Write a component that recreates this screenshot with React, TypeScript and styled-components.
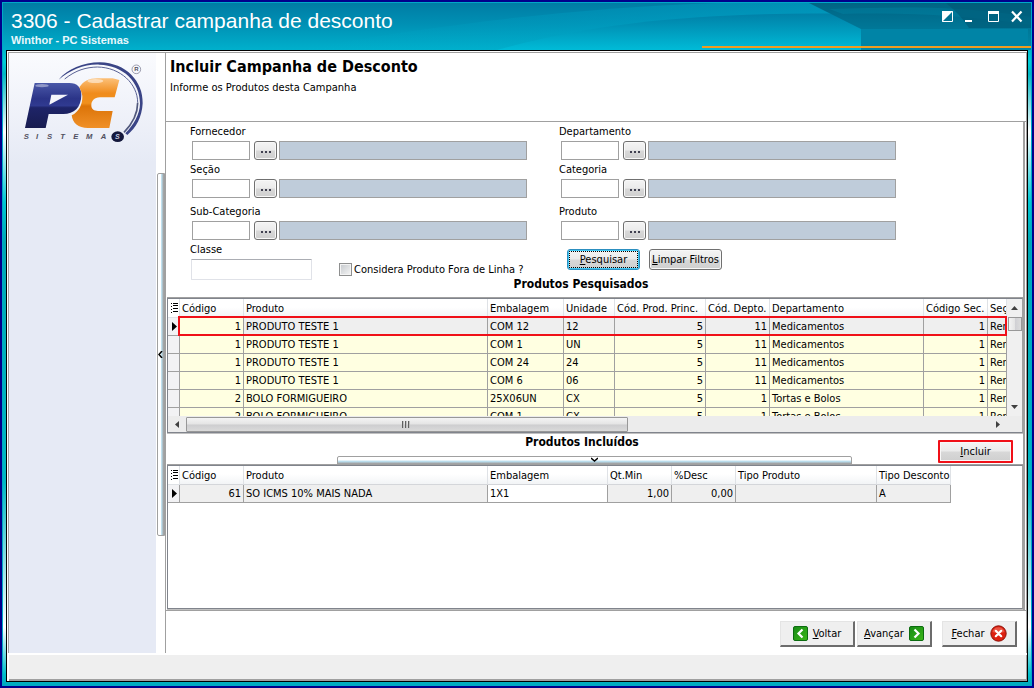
import React from 'react';
import styled, { createGlobalStyle, css } from 'styled-components';

const GlobalStyle = createGlobalStyle`
  * { box-sizing: border-box; }
  body { margin: 0; background: #00008b; }
  body, button, input, table {
    font-family: "DejaVu Sans Condensed", Tahoma, sans-serif;
    font-size: 11px;
    line-height: 16px;
    color: #000;
  }
  button, input { margin: 0; }
`;

const Frame = styled.div`
  display: flex;
  flex-direction: column;
  min-height: 100vh;
  border: 2px solid #00008b;
  padding: 1px 4px 4px;
  background: linear-gradient(#00b8cc 0, #00b0c4 44px, #00ced8 60px, #00b8c4 72px, #fff 130px, #00c8d4 200px, #00a8b4 240px, #00b8c4 480px, #fff 625px, #00c0cc 672px, #00a8bc 100%);
  box-shadow: inset 0 0 0 1px #00a8c8;
`;

const TitleBar = styled.header`
  position: relative;
  display: flex;
  justify-content: space-between;
  height: 47px;
  margin: 0 -3px;
  padding: 6px 8px 0;
  color: #fff;
  background: linear-gradient(#007ca4, #0090b4 45%, #00b0cc);
`;

const Waves = styled.svg`
  position: absolute;
  top: 0;
  right: 0;
  width: 734px;
  height: 47px;
`;

const Titles = styled.div`
  position: relative;
  font-family: "Liberation Sans", Arial, sans-serif;
`;

const AppTitle = styled.h1`
  margin: 0;
  font-size: 21px;
  line-height: 24px;
  font-weight: 400;
`;

const AppName = styled.p`
  margin: 0;
  font-size: 11px;
  line-height: 14px;
  font-weight: 700;
  color: #e8f8fc;
`;

const WindowControls = styled.div`
  position: relative;
  display: flex;
  gap: 11px;
  height: 14px;
`;

const WindowButton = styled.button`
  display: flex;
  width: 12px;
  height: 14px;
  padding: 0;
  border: 0;
  background: none;
`;

const Client = styled.div`
  flex: 1;
  display: flex;
  flex-direction: column;
  border: 1px solid #000;
  background: #fff;
  padding: 1px 0 0 1px;
`;

const Body = styled.div`
  flex: 1;
  display: flex;
  border: solid #a0a0a0;
  border-width: 1px 0 0 1px;
`;

const Sidebar = styled.aside`
  width: 147px;
  flex: none;
  background: linear-gradient(#fafbfe, #f1f3fa 50px, #e6eaf5 110px, #e6eaf5);
`;

const LogoBox = styled.div`
  padding: 1px 0 0 5px;
`;

const LogoImage = styled.svg`
  display: block;
`;

const Gutter = styled.div`
  width: 9px;
  flex: none;
  padding: 120px 0 0 1px;
`;

const SideHandle = styled.button`
  display: flex;
  align-items: center;
  width: 8px;
  height: 363px;
  padding: 0;
  border: 1px solid #a0a0a0;
  border-radius: 2px 0 0 2px;
  background: linear-gradient(90deg, #fff 45%, #b8dcec 60%, #a0a0a0 95%);
`;

const Main = styled.main`
  flex: 1;
  min-width: 0;
  display: flex;
  flex-direction: column;
  border-left: 1px solid #a0a0a0;
  border-right: 1px solid #a0a0a0;
`;

const PageHeader = styled.div`
  height: 69px;
  padding: 4px 4px 0;
  border-bottom: 1px solid #a0a0a0;
`;

const PageTitle = styled.h2`
  margin: 0;
  font-size: 16px;
  line-height: 20px;
`;

const PageHint = styled.p`
  margin: 3px 0 0;
`;

const Work = styled.div`
  flex: 1;
  display: flex;
  flex-direction: column;
  margin-right: 1px;
  border-right: 2px solid #a0a0a0;
`;

const Filters = styled.form`
  display: grid;
  grid-template-columns: 1fr 1fr;
  column-gap: 32px;
  padding: 0 127px 0 24px;
  height: 153px;
`;

const FilterColumn = styled.div`
  display: flex;
  flex-direction: column;
`;

const Field = styled.div<{ $spaced?: boolean }>`
  margin-top: ${(p) => (p.$spaced ? 4 : 0)}px;
`;

const Label = styled.label`
  display: block;
  height: 19px;
  line-height: 20px;
`;

const FieldRow = styled.div`
  display: flex;
  margin-left: 2px;
  height: 19px;
`;

const TextBox = styled.input`
  width: 58px;
  border: 1px solid #a0a0a0;
  padding: 0 3px;
  outline: none;
`;

const ResultBox = styled.input`
  flex: 1;
  min-width: 0;
  border: 1px solid #a0a0a0;
  background: #bfccda;
  padding: 0 3px;
`;

const buttonFace = css`
  border: 1px solid #707070;
  border-radius: 3px;
  background: linear-gradient(#f4f4f4, #ebebeb 48%, #d8d8d8 52%, #cfcfcf);
  box-shadow: inset 0 0 0 1px #f8f8f8;
`;

const LookupButton = styled.button`
  ${buttonFace}
  display: flex;
  align-items: center;
  justify-content: center;
  width: 23px;
  padding: 3px 0 0;
  margin: 0 2px 0 4px;
`;

const ClassBox = styled.input`
  display: block;
  width: 121px;
  height: 21px;
  border: 1px solid #e0e2e8;
  border-top-color: #abadb3;
  border-radius: 1px;
`;

const ClassRow = styled.div`
  display: flex;
  align-items: center;
  gap: 27px;
  margin-left: 1px;
`;

const CheckLabel = styled.label`
  display: flex;
  align-items: center;
  gap: 2px;
  white-space: nowrap;
`;

const Check = styled.input`
  appearance: none;
  width: 13px;
  height: 13px;
  border: 1px solid #8e8f8f;
  box-shadow: inset 0 0 0 1px #f4f4f4;
  background: linear-gradient(135deg, #c4c8cc, #f6f6f6);
`;

const Actions = styled.div`
  display: flex;
  align-items: flex-end;
  gap: 9px;
  margin: 9px 0 0 8px;
`;

const PushButton = styled.button<{ $focused?: boolean }>`
  ${buttonFace}
  height: 21px;
  width: 73px;
  padding: 0;
  line-height: 18px;
  white-space: nowrap;
  ${(p) =>
    p.$focused &&
    css`
      border-color: #2c8fc0;
      box-shadow: inset 0 0 0 1px #40c8f4;
      outline: 1px dotted #000;
      outline-offset: -3px;
    `}
`;

const SectionTitle = styled.h3`
  margin: 0;
  font-size: 12px;
  line-height: 18px;
  text-align: center;
`;

const SearchedHeading = styled(SectionTitle)`
  height: 23px;
  padding-right: 27px;
`;

const IncludedBar = styled.div`
  position: relative;
  height: 32px;
  padding-right: 25px;
`;

const IncludeButton = styled(PushButton)`
  position: absolute;
  right: 10px;
  top: 7px;
  width: 75px;
  height: 23px;
  border: 2px solid #f01018;
  border-radius: 1px;
`;

const BottomHandle = styled.button`
  position: absolute;
  bottom: 0;
  left: 20%;
  width: 60%;
  height: 9px;
  display: flex;
  justify-content: center;
  padding: 0;
  border: 1px solid #a0a0a0;
  border-radius: 2px 2px 0 0;
  background: linear-gradient(#fff 40%, #b8dcec 65%, #a0a0a0 95%);
`;

const GridBox = styled.section<{ $fill?: boolean }>`
  display: grid;
  grid-template-columns: minmax(0, 1fr) auto;
  align-content: start;
  margin-left: 1px;
  border: 1px solid #80848c;
  border-right-color: #a0a0a0;
  box-shadow: 0 -1px #a0a0a0, 0 1px #c0c0c0;
  ${(p) =>
    p.$fill &&
    css`
      flex: 1;
      margin-bottom: 1px;
    `}
`;

const Viewport = styled.div<{ $rows?: number }>`
  overflow: hidden;
  ${(p) => p.$rows && css`height: 117px;`}
`;

const DataTable = styled.table<{ $full?: boolean }>`
  table-layout: fixed;
  border-collapse: separate;
  border-spacing: 0;
  width: ${(p) => (p.$full ? '100%' : '783px')};
  white-space: nowrap;
`;

const Head = styled.th`
  height: 19px;
  padding: 2px 0 0 2px;
  overflow: hidden;
  text-align: left;
  font-weight: 400;
  line-height: 16px;
  border-right: 1px solid #dfe2e6;
  border-bottom: 1px solid #d4d6da;
  background: linear-gradient(#fff 45%, #f2f4f6);
`;

const Marker = styled.th<{ $plain?: boolean }>`
  height: 18px;
  padding: 0 0 0 3px;
  line-height: 0;
  background: #f2f2f4;
  border-right: 1px solid #a0a0a0;
  border-bottom: 1px solid #a0a0a0;
  ${(p) =>
    p.$plain &&
    css`
      padding-left: 1px;
      background: #fff;
      border-color: #dfe2e6;
    `}
`;

const Cell = styled.td<{ $tone?: 'yellow' | 'gray' | 'white'; $right?: boolean }>`
  height: 18px;
  padding: ${(p) => (p.$right ? '1px 2px 0 0' : '1px 0 0 2px')};
  line-height: 16px;
  overflow: hidden;
  text-align: ${(p) => (p.$right ? 'right' : 'left')};
  border-right: 1px solid #a0a0a0;
  border-bottom: 1px solid #a0a0a0;
  background: ${(p) => ({ yellow: '#ffffe1', gray: '#efefef', white: '#fff' })[p.$tone ?? 'yellow']};
`;

const Highlight = styled.div`
  position: absolute;
  left: 10px;
  right: 0;
  top: 17px;
  height: 20px;
  border: 2px solid #f01018;
`;

const Clip = styled.div`
  position: relative;
`;

const VScroll = styled.div`
  display: flex;
  flex-direction: column;
  align-items: center;
  width: 15px;
  background: #f0f0f0;
`;

const VArrow = styled.button`
  display: flex;
  align-items: center;
  justify-content: center;
  width: 15px;
  height: 18px;
  padding: 0;
  border: 0;
  background: none;
`;

const VThumb = styled.div`
  width: 14px;
  height: 14px;
  margin-bottom: auto;
  border: 1px solid #989898;
  background: linear-gradient(90deg, #f4f4f4, #e4e4e4 48%, #d0d0d4 52%, #dcdcdc);
`;

const HScroll = styled.div`
  grid-column: 1 / -1;
  display: flex;
  align-items: center;
  height: 16px;
  padding-right: 15px;
  background: #ececec;
`;

const HArrow = styled(VArrow)`
  width: 18px;
  height: 16px;
`;

const HTrack = styled.div`
  flex: 1;
`;

const HThumb = styled.div`
  display: flex;
  align-items: center;
  justify-content: center;
  width: 55%;
  height: 15px;
  border: 1px solid #989898;
  border-radius: 1px;
  background: linear-gradient(#f4f4f4, #e4e4e4 48%, #cdcdcf 52%, #dadada);
`;

const Footer = styled.footer`
  display: flex;
  justify-content: flex-end;
  height: 43px;
  padding: 10px 9px 0 0;
  gap: 2px;
  border-top: 1px solid #a0a0a0;
`;

const NavButton = styled.button<{ $apart?: boolean }>`
  display: flex;
  align-items: center;
  justify-content: center;
  gap: 5px;
  width: 75px;
  height: 26px;
  margin-left: ${(p) => (p.$apart ? 8 : 0)}px;
  padding: 0;
  border: solid;
  border-width: 1px 2px 2px 1px;
  border-color: #e4e4e4 #6c6c6c #6c6c6c #e4e4e4;
  background: #efefef;
`;

const StatusBar = styled.div`
  height: 26px;
  margin: 2px 0 0 1px;
  background: #efefef;
  border: solid #a0a0a0;
  border-width: 0 1px 2px 0;
`;

const Logo = () => (
  <LogoImage width="140" height="96" viewBox="0 0 420 288" role="img" aria-label="PC Sistemas">
    <defs>
      <linearGradient id="blue" x1="0" y1="0" x2="0" y2="1">
        <stop offset="0" stopColor="#4a58a8" />
        <stop offset="0.35" stopColor="#2b3488" />
        <stop offset="0.5" stopColor="#303a90" />
        <stop offset="0.55" stopColor="#1e2468" />
        <stop offset="1" stopColor="#181c50" />
      </linearGradient>
      <linearGradient id="orange" x1="0" y1="0" x2="0" y2="1">
        <stop offset="0" stopColor="#fcc078" />
        <stop offset="0.3" stopColor="#f08c1c" />
        <stop offset="0.5" stopColor="#f0901c" />
        <stop offset="0.56" stopColor="#dc7408" />
        <stop offset="1" stopColor="#f09028" />
      </linearGradient>
    </defs>
    <path d="M134 77C160 46 208 25 258 25C336 27 388 82 386 148C384 190 366 222 340 243L334 238C358 214 378 182 378 148C378 84 328 34 256 32C212 30 170 48 134 77Z" fill="#3a4486" />
    <path d="M152 75C186 48 216 40 250 39C320 40 371 90 371 146" fill="none" stroke="#5a6294" strokeWidth="3" />
    <path d="M371 146C371 180 352 212 330 235" fill="none" stroke="#50587c" strokeWidth="5" />
    <path d="M62 87H166C190 87 202 101 202 122C202 160 180 180 148 180H104L95 222H33Z" fill="url(#blue)" />
    <path d="M112 122H162L106 152Z" fill="#f4f5fb" />
    <path d="M316 78L302 130H258C240 130 232 142 232 154C232 166 240 171 252 171H296L286 222H222C192 222 176 208 173 184C194 174 206 152 205 126C203 113 198 104 196 100C208 82 224 73 250 73H296Z" fill="url(#orange)" />
    <ellipse cx="84" cy="95" rx="20" ry="5" fill="#fff" opacity="0.4" />
    <ellipse cx="244" cy="81" rx="24" ry="6" fill="#fff" opacity="0.5" />
    <circle cx="367" cy="46" r="13" fill="none" stroke="#707088" strokeWidth="2" />
    <g fontFamily="Liberation Sans, sans-serif" fontWeight="700" fill="#505060">
      <text x="367" y="52" fontSize="18" textAnchor="middle">R</text>
      <g fontSize="23" fontStyle="italic">
        <text x="29" y="256">S</text>
        <text x="66" y="256">I</text>
        <text x="99" y="256">S</text>
        <text x="139" y="256">T</text>
        <text x="178" y="256">E</text>
        <text x="216" y="256">M</text>
        <text x="260" y="256">A</text>
      </g>
      <ellipse cx="311" cy="248" rx="19" ry="16" fill="#14183c" />
      <text x="303" y="256" fontSize="21" fontStyle="italic" fill="#c8cce0">S</text>
    </g>
  </LogoImage>
);

const HeaderWaves = () => (
  <Waves viewBox="0 0 734 47" preserveAspectRatio="none" aria-hidden="true">
    <defs>
      <linearGradient id="glow" x1="0" y1="0" x2="0" y2="1">
        <stop offset="0" stopColor="#0078a0" />
        <stop offset="1" stopColor="#00c0dc" />
      </linearGradient>
      <linearGradient id="fade" x1="0" y1="0" x2="1" y2="0">
        <stop offset="0" stopColor="#00b0d0" stopOpacity="0" />
        <stop offset="1" stopColor="#00a8cc" stopOpacity="0.6" />
      </linearGradient>
      <linearGradient id="deep" x1="0" y1="0" x2="0" y2="1">
        <stop offset="0" stopColor="#006484" />
        <stop offset="1" stopColor="#0088a8" />
      </linearGradient>
    </defs>
    <path d="M0 47C200 10 400 -6 560 0L720 47Z" fill="url(#fade)" />
    <path d="M200 47C330 10 470 8 610 12L734 20V47Z" fill="url(#glow)" opacity="0.7" />
    <path d="M0 0H520C600 16 640 22 734 24V0Z" fill="#0098c0" opacity="0.35" />
    <path d="M512 0H734V47H564V26Z" fill="url(#deep)" />
    <path d="M546 11C620 9 680 14 734 22V14C660 2 600 4 532 6Z" fill="#0080a0" opacity="0.5" />
    <path d="M649 0H734V25H672Q664 12 649 0Z" fill="#005874" opacity="0.6" />
    <path d="M564 26H731V41H564Z" fill="#0084a6" />
    <path d="M405 43H734V45H405Z" fill="#f09c20" />
  </Waves>
);

const Ellipsis = () => (
  <svg width="10" height="2" viewBox="0 0 10 2" aria-hidden="true">
    <path d="M0 0h2v2H0zM4 0h2v2H4zM8 0h2v2H8z" fill="#404050" />
  </svg>
);

const GridMenu = () => (
  <svg width="7" height="10" viewBox="0 0 7 10" aria-hidden="true">
    <path d="M0 0h1v1H0zM2 0h5v1H2zM2 2h5v1H2zM0 3h1v1H0zM2 5h5v1H2zM0 6h1v1H0zM2 8h5v1H2zM0 9h1v1H0z" fill="#000" />
  </svg>
);

const RowPointer = () => (
  <svg width="6" height="9" viewBox="0 0 6 9" aria-hidden="true">
    <path d="M0 0L5 4.500L0 9Z" fill="#000" />
  </svg>
);

const Arrow = ({ d, w, h }: { d: string; w: number; h: number }) => (
  <svg width={w} height={h} viewBox={`0 0 ${w} ${h}`} aria-hidden="true">
    <path d={d} fill="#404040" />
  </svg>
);

const GreenArrow = ({ d }: { d: string }) => (
  <svg width="15" height="15" viewBox="0 0 15 15" aria-hidden="true">
    <defs>
      <linearGradient id="green" x1="0" y1="0" x2="1" y2="1">
        <stop offset="0" stopColor="#168a16" />
        <stop offset="1" stopColor="#3cb818" />
      </linearGradient>
    </defs>
    <rect x="0.500" y="0.500" width="14" height="14" rx="1.500" fill="url(#green)" stroke="#0c6c10" />
    <path d={d} fill="none" stroke="#fff" strokeWidth="2.200" />
  </svg>
);

const RedCross = () => (
  <svg width="17" height="17" viewBox="0 0 17 17" aria-hidden="true">
    <circle cx="8.500" cy="8.500" r="7.700" fill="#dc2010" stroke="#8c1008" />
    <path d="M2.500 7A6.200 6.200 0 0 1 14.500 7Q8.500 9 2.500 7Z" fill="#f06858" opacity="0.7" />
    <path d="M5.800 5.800L11.200 11.200M11.200 5.800L5.800 11.200" stroke="#fff" strokeWidth="2.200" strokeLinecap="round" />
  </svg>
);

function LookupField({ id, label, spaced }: { id: string; label: string; spaced?: boolean }) {
  return (
    <Field $spaced={spaced}>
      <Label htmlFor={id}>{label}</Label>
      <FieldRow>
        <TextBox id={id} type="text" />
        <LookupButton type="button" aria-label={`Localizar ${label}`}>
          <Ellipsis />
        </LookupButton>
        <ResultBox type="text" readOnly aria-label={`Nome: ${label}`} />
      </FieldRow>
    </Field>
  );
}

const searchedColumns = [
  { name: 'Código', width: 64, right: true },
  { name: 'Produto', width: 244 },
  { name: 'Embalagem', width: 76 },
  { name: 'Unidade', width: 51 },
  { name: 'Cód. Prod. Princ.', width: 91, right: true },
  { name: 'Cód. Depto.', width: 64, right: true },
  { name: 'Departamento', width: 154 },
  { name: 'Código Sec.', width: 64, right: true },
  { name: 'Seção', width: undefined },
];

const searchedRows = [
  ['1', 'PRODUTO TESTE 1', 'COM 12', '12', '5', '11', 'Medicamentos', '1', 'Remédios'],
  ['1', 'PRODUTO TESTE 1', 'COM 1', 'UN', '5', '11', 'Medicamentos', '1', 'Remédios'],
  ['1', 'PRODUTO TESTE 1', 'COM 24', '24', '5', '11', 'Medicamentos', '1', 'Remédios'],
  ['1', 'PRODUTO TESTE 1', 'COM 6', '06', '5', '11', 'Medicamentos', '1', 'Remédios'],
  ['2', 'BOLO FORMIGUEIRO', '25X06UN', 'CX', '5', '1', 'Tortas e Bolos', '1', 'Remédios'],
  ['2', 'BOLO FORMIGUEIRO', 'COM 1', 'CX', '5', '1', 'Tortas e Bolos', '1', 'Remédios'],
];

const includedColumns = [
  { name: 'Código', width: 64, right: true },
  { name: 'Produto', width: 244 },
  { name: 'Embalagem', width: 120 },
  { name: 'Qt.Min', width: 64, right: true },
  { name: '%Desc', width: 64, right: true },
  { name: 'Tipo Produto', width: 141 },
  { name: 'Tipo Desconto', width: 74 },
];

const includedRow = ['61', 'SO ICMS 10% MAIS NADA', '1X1', '1,00', '0,00', '', 'A'];

function SearchedTable() {
  return (
    <DataTable $full>
      <colgroup>
        <col width={12} />
        {searchedColumns.map((c) => (
          <col key={c.name} width={c.width} />
        ))}
      </colgroup>
      <thead>
        <tr>
          <Marker $plain><GridMenu /></Marker>
          {searchedColumns.map((c) => (
            <Head key={c.name}>{c.name}</Head>
          ))}
        </tr>
      </thead>
      <tbody>
        {searchedRows.map((row, r) => (
          <tr key={r}>
            <Marker>{r === 0 && <RowPointer />}</Marker>
            {row.map((value, c) => (
              <Cell key={c} $right={searchedColumns[c].right} $tone={r === 0 && c > 0 ? 'gray' : 'yellow'}>
                {value}
              </Cell>
            ))}
          </tr>
        ))}
      </tbody>
    </DataTable>
  );
}

function IncludedTable() {
  return (
    <DataTable>
      <colgroup>
        <col width={12} />
        {includedColumns.map((c) => (
          <col key={c.name} width={c.width} />
        ))}
      </colgroup>
      <thead>
        <tr>
          <Marker $plain><GridMenu /></Marker>
          {includedColumns.map((c) => (
            <Head key={c.name}>{c.name}</Head>
          ))}
        </tr>
      </thead>
      <tbody>
        <tr>
          <Marker><RowPointer /></Marker>
          {includedRow.map((value, c) => (
            <Cell key={c} $right={includedColumns[c].right} $tone={c === 2 ? 'white' : 'gray'}>
              {value}
            </Cell>
          ))}
        </tr>
      </tbody>
    </DataTable>
  );
}

export default function App() {
  return (
    <>
      <GlobalStyle />
      <Frame>
        <TitleBar>
          <HeaderWaves />
          <Titles>
            <AppTitle>3306 - Cadastrar campanha de desconto</AppTitle>
            <AppName>Winthor - PC Sistemas</AppName>
          </Titles>
          <WindowControls>
            <WindowButton aria-label="Recolher">
              <svg width="11" height="14" viewBox="0 0 11 14">
                <path d="M.5 2.500h10v10H.5Z" fill="none" stroke="#fff" />
                <path d="M0 2H11L0 13Z" fill="#fff" />
              </svg>
            </WindowButton>
            <WindowButton aria-label="Minimizar">
              <svg width="11" height="14" viewBox="0 0 11 14">
                <path d="M0 11h7v2H0z" fill="#fff" />
              </svg>
            </WindowButton>
            <WindowButton aria-label="Maximizar">
              <svg width="12" height="14" viewBox="0 0 12 14">
                <path d="M.5 2.500h10v10H.5Z" fill="none" stroke="#fff" />
                <path d="M0 2h11v3H0z" fill="#fff" />
              </svg>
            </WindowButton>
            <WindowButton aria-label="Fechar janela">
              <svg width="12" height="14" viewBox="0 0 12 14">
                <path d="M1 2.500L10.500 12.500M10.500 2.500L1 12.500" stroke="#fff" strokeWidth="2.200" />
              </svg>
            </WindowButton>
          </WindowControls>
        </TitleBar>
        <Client>
          <Body>
            <Sidebar>
              <LogoBox><Logo /></LogoBox>
            </Sidebar>
            <Gutter>
              <SideHandle aria-label="Ocultar painel lateral">
                <svg width="5" height="7" viewBox="0 0 5 7">
                  <path d="M4 0L1 3.500L4 7" fill="none" stroke="#000" strokeWidth="1.500" />
                </svg>
              </SideHandle>
            </Gutter>
            <Main>
              <PageHeader>
                <PageTitle>Incluir Campanha de Desconto</PageTitle>
                <PageHint>Informe os Produtos desta Campanha</PageHint>
              </PageHeader>
              <Work>
                <Filters>
                  <FilterColumn>
                    <LookupField id="fornecedor" label="Fornecedor" />
                    <LookupField id="secao" label="Seção" />
                    <LookupField id="subcategoria" label="Sub-Categoria" spaced />
                    <Label htmlFor="classe">Classe</Label>
                    <ClassRow>
                      <ClassBox id="classe" type="text" />
                      <CheckLabel>
                        <Check type="checkbox" />
                        Considera Produto Fora de Linha ?
                      </CheckLabel>
                    </ClassRow>
                  </FilterColumn>
                  <FilterColumn>
                    <LookupField id="departamento" label="Departamento" />
                    <LookupField id="categoria" label="Categoria" />
                    <LookupField id="produto" label="Produto" spaced />
                    <Actions>
                      <PushButton type="button" $focused>
                        <u>P</u>esquisar
                      </PushButton>
                      <PushButton type="button">
                        <u>L</u>impar Filtros
                      </PushButton>
                    </Actions>
                  </FilterColumn>
                </Filters>
                <SearchedHeading>Produtos Pesquisados</SearchedHeading>
                <GridBox>
                  <Clip>
                    <Viewport $rows={6}>
                      <SearchedTable />
                    </Viewport>
                    <Highlight />
                  </Clip>
                  <VScroll>
                    <VArrow aria-label="Rolar para cima"><Arrow w={7} h={4} d="M0 4L3.500 0L7 4Z" /></VArrow>
                    <VThumb />
                    <VArrow aria-label="Rolar para baixo"><Arrow w={7} h={4} d="M0 0L3.500 4L7 0Z" /></VArrow>
                  </VScroll>
                  <HScroll>
                    <HArrow aria-label="Rolar para a esquerda"><Arrow w={4} h={7} d="M4 0L0 3.500L4 7Z" /></HArrow>
                    <HTrack>
                      <HThumb>
                        <svg width="9" height="7" viewBox="0 0 9 7" aria-hidden="true">
                          <path d="M0 0h1v7H0zM3 0h1v7H3zM6 0h1v7H6z" fill="#606060" />
                          <path d="M1 0h1v7H1zM4 0h1v7H4zM7 0h1v7H7z" fill="#c0c0c0" />
                        </svg>
                      </HThumb>
                    </HTrack>
                    <HArrow aria-label="Rolar para a direita"><Arrow w={4} h={7} d="M0 0L4 3.500L0 7Z" /></HArrow>
                  </HScroll>
                </GridBox>
                <IncludedBar>
                  <SectionTitle>Produtos Incluídos</SectionTitle>
                  <BottomHandle aria-label="Ocultar produtos incluídos">
                    <svg width="7" height="5" viewBox="0 0 7 5">
                      <path d="M0 1L3.500 4L7 1" fill="none" stroke="#000" strokeWidth="1.500" />
                    </svg>
                  </BottomHandle>
                  <IncludeButton type="button">
                    <u>I</u>ncluir
                  </IncludeButton>
                </IncludedBar>
                <GridBox $fill>
                  <Viewport>
                    <IncludedTable />
                  </Viewport>
                </GridBox>
              </Work>
              <Footer>
                <NavButton>
                  <GreenArrow d="M9.500 3.500L5.500 7.500L9.500 11.500" />
                  <span><u>V</u>oltar</span>
                </NavButton>
                <NavButton>
                  <span><u>A</u>vançar</span>
                  <GreenArrow d="M5.500 3.500L9.500 7.500L5.500 11.500" />
                </NavButton>
                <NavButton $apart>
                  <span><u>F</u>echar</span>
                  <RedCross />
                </NavButton>
              </Footer>
            </Main>
          </Body>
          <StatusBar />
        </Client>
      </Frame>
    </>
  );
}
